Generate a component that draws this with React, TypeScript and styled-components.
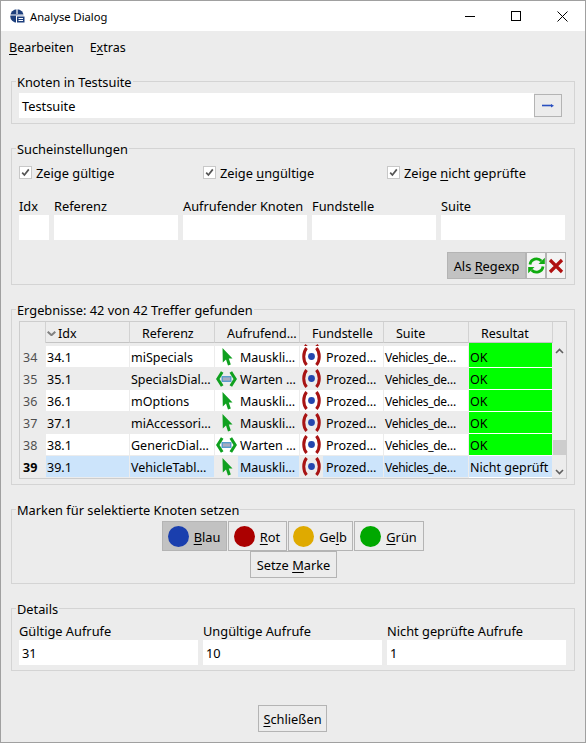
import React from "react";
import styled, { createGlobalStyle } from "styled-components";

const FONT = `"Noto Sans", "Open Sans", "Liberation Sans", sans-serif`;

const Global = createGlobalStyle`
  html, body { margin: 0; padding: 0; background: #ececec; }
  * { box-sizing: border-box; }
  body { font-family: ${FONT}; font-size: 12.8px; color: #000; }
  u { text-underline-offset: 2px; }
`;

const Window = styled.div`
  width: 586px;
  height: 743px;
  border: 1px solid #a0a0a0;
  background: #ececec;
  display: flex;
  flex-direction: column;
  overflow: hidden;
`;
const TitleBar = styled.div`
  height: 30px;
  background: #fff;
  display: flex;
  align-items: center;
  padding-left: 9px;
  flex: none;
`;
const TitleText = styled.span`
  margin-left: 5px;
  font-size: 11.2px;
  flex: 1;
`;
const WinBtn = styled.div`
  width: 46px;
  height: 30px;
  display: flex;
  align-items: center;
  justify-content: center;
`;
const MenuBar = styled.div`
  height: 32px;
  display: flex;
  align-items: center;
  gap: 16px;
  padding: 0 0 0 8px;
  flex: none;
  font-size: 12.5px;
`;
const Body = styled.div`
  display: flex;
  flex-direction: column;
  gap: 15px;
  padding: 9px 10px 0;
`;
const Group = styled.fieldset<{ $h: number }>`
  margin: 0;
  height: ${(p) => p.$h}px;
  border: 1px solid #d4d4d4;
  padding: 3px 8px 0 7px;
  min-width: 0;
  display: flex;
  flex-direction: column;
`;
const Legend = styled.legend`
  margin-left: -3px;
  padding: 0 1px;
  height: 18px;
  line-height: 20px;
`;
const Field = styled.div<{ $w?: number }>`
  height: 25px;
  background: #fff;
  padding: 2px 0 0 3px;
  line-height: 23px;
  flex: ${(p) => (p.$w ? "none" : "1")};
  width: ${(p) => (p.$w ? p.$w + "px" : "auto")};
`;
const NodeRow = styled.div`
  display: flex;
  align-items: center;
  padding-right: 4px;
`;
const PushButton = styled.button<{ $on?: boolean; $w: number; $h: number }>`
  width: ${(p) => p.$w}px;
  height: ${(p) => p.$h}px;
  flex: none;
  padding: 0;
  margin: 0;
  border: 1px solid #b4b4b4;
  background: ${(p) => (p.$on ? "#c2c2c2" : "#ececec")};
  font: inherit;
  color: #000;
  display: flex;
  align-items: center;
  justify-content: center;
`;
const IconButton = styled(PushButton)`
  background: #f3f3f3;
`;
const ButtonText = styled.span`
  padding-top: 1px;
  white-space: pre;
`;
const ChecksRow = styled.div`
  display: grid;
  grid-template-columns: 184px 184px 1fr;
  margin-top: 2px;
  height: 20px;
  align-items: center;
`;
const Check = styled.label`
  display: flex;
  align-items: center;
  gap: 4px;
`;
const CheckText = styled.span`
  padding-top: 1px;
`;
const Box = styled.span`
  width: 13px;
  height: 13px;
  background: #fff;
  border: 1px solid #c8c8c8;
  display: flex;
  align-items: center;
  justify-content: center;
`;
const FilterGrid = styled.div`
  display: grid;
  grid-template-columns: 30px 124px 124px 124px 124px;
  column-gap: 5px;
  margin-top: 14px;
`;
const ColumnLabel = styled.div`
  height: 18px;
  line-height: 20px;
  margin-bottom: 1px;
  white-space: nowrap;
`;
const FilterActions = styled.div`
  display: flex;
  justify-content: flex-end;
  margin-top: 12px;
`;
const Table = styled.div`
  width: 548px;
  height: 158px;
  border: 1px solid #cdcdcd;
  position: relative;
  overflow: hidden;
  font-size: 12.5px;
`;
const Header = styled.div`
  display: grid;
  grid-template-columns: 26px 84px 85px 85px 84px 85px 84px;
  height: 21px;
`;
const HeadCell = styled.div<{ $corner?: boolean }>`
  border-right: 1px solid #d2d2d2;
  border-bottom: ${(p) => (p.$corner ? "none" : "1px solid #c4c4c4")};
  padding: 3px 0 0 12px;
  line-height: 17px;
  white-space: nowrap;
  display: flex;
  align-items: center;
`;
const SortMark = styled.svg`
  margin-left: -11px;
  margin-right: 2px;
`;
const Rows = styled.div`
  display: flex;
  flex-direction: column;
`;
const Row = styled.div<{ $sliver?: boolean }>`
  display: grid;
  grid-template-columns: 26px 83px 1px 84px 1px 84px 1px 83px 1px 84px 1px 83px;
  height: ${(p) => (p.$sliver ? "3px" : "22px")};
  overflow: hidden;
  align-items: ${(p) => (p.$sliver ? "end" : "start")};
`;
const RowNum = styled.div<{ $bold?: boolean }>`
  height: 21px;
  padding: 3px 0 0 3px;
  line-height: 18px;
  color: ${(p) => (p.$bold ? "#000" : "#505050")};
  font-weight: ${(p) => (p.$bold ? 700 : 400)};
`;
const Sep = styled.div``;
const Cell = styled.div<{ $bg: string }>`
  height: 21px;
  padding: 3px 0 0 1px;
  line-height: 18px;
  background: ${(p) => p.$bg};
  white-space: nowrap;
  overflow: hidden;
`;
const SuiteCell = styled(Cell)`
  font-size: 12px;
  letter-spacing: -0.3px;
`;
const ResultCell = styled(Cell)`
  box-shadow: 0 1px 0 #fff;
`;
const IconCell = styled.div<{ $bg: string; $sel: boolean }>`
  height: 21px;
  background: ${(p) => (p.$sel ? "#ececec" : p.$bg)};
  display: grid;
  grid-template-columns: 23px 1fr;
  white-space: nowrap;
  overflow: hidden;
`;
const IconSlot = styled.div`
  height: 21px;
  display: flex;
  align-items: center;
  justify-content: center;
`;
const IconText = styled.div<{ $bg: string; $pad: number }>`
  background: ${(p) => p.$bg};
  padding: 3px 0 0 ${(p) => p.$pad}px;
  line-height: 18px;
  height: 21px;
`;
const Scrollbar = styled.div`
  position: absolute;
  right: 0;
  top: 21px;
  bottom: 0;
  width: 13px;
  background: #ececec;
`;
const ScrollGlyph = styled.svg<{ $top: number }>`
  position: absolute;
  left: 2px;
  top: ${(p) => p.$top}px;
`;
const Thumb = styled.div`
  position: absolute;
  left: 0;
  top: 97px;
  width: 13px;
  height: 15px;
  background: #cdcdcd;
`;
const MarkRow = styled.div`
  display: flex;
  justify-content: center;
  gap: 1px;
`;
const MarkLabel = styled(ButtonText)`
  margin-left: 5px;
`;
const Dot = styled.span<{ $c: string }>`
  width: 21px;
  height: 21px;
  border-radius: 50%;
  background: ${(p) => p.$c};
  flex: none;
`;
const CenterRow = styled.div`
  display: flex;
  justify-content: center;
  padding-left: 2px;
`;
const DetailGrid = styled.div`
  display: grid;
  grid-template-columns: 179px 179px 179px;
  column-gap: 5px;
  margin-top: 1px;
`;
const DetailLabel = styled.div`
  height: 18px;
  line-height: 20px;
  margin-bottom: 1px;
  white-space: nowrap;
`;
const Footer = styled.div`
  display: flex;
  justify-content: center;
  margin-top: 34px;
  padding-right: 1px;
`;

const AppIcon = () => (
  <svg width="15" height="15" viewBox="0 0 15 15">
    <circle cx="7" cy="7" r="6.8" fill="#1d3f7d" />
    <path d="M7 0V5M0 6H14" stroke="#fff" strokeWidth="1.2" />
    <rect x="6" y="6.5" width="9" height="7.5" fill="#fff" />
    <rect x="7" y="7.5" width="7.5" height="6" fill="#1d3f7d" />
    <path d="M8.5 9.5H13M8.5 11.5H13" stroke="#fff" strokeWidth="1" />
  </svg>
);
const MinIcon = () => (
  <svg width="10" height="10" viewBox="0 0 10 10"><path d="M0 5.5H10" stroke="#000" /></svg>
);
const MaxIcon = () => (
  <svg width="10" height="10" viewBox="0 0 10 10"><rect x=".5" y=".5" width="9" height="9" fill="none" stroke="#000" /></svg>
);
const CloseIcon = () => (
  <svg width="11" height="11" viewBox="0 0 11 11"><path d="M.5 .5L10.5 10.5M10.5 .5L.5 10.5" stroke="#000" /></svg>
);
const Tick = () => (
  <svg width="9" height="9" viewBox="0 0 9 9"><path d="M1.2 4.6L3.4 7L7.8 1.4" fill="none" stroke="#555" strokeWidth="1.7" /></svg>
);
const ArrowIcon = () => (
  <svg width="12" height="6" viewBox="0 0 12 6"><path d="M0 2.5H10" stroke="#2a50c0" strokeWidth="1.6" /><path d="M9 1L12 2.7L9 4.4Z" fill="#2a50c0" /></svg>
);
const RefreshIcon = () => (
  <svg width="17" height="17" viewBox="0 0 17 17">
    <path d="M2 7.5A6.6 6.6 0 0 1 13.4 4" fill="none" stroke="#10ab10" strokeWidth="2.8" />
    <path d="M10.5 7H16.8V.8Z" fill="#10ab10" />
    <path d="M15 9.5A6.6 6.6 0 0 1 3.6 13" fill="none" stroke="#10ab10" strokeWidth="2.8" />
    <path d="M6.5 10H.2V16.2Z" fill="#10ab10" />
  </svg>
);
const CrossIcon = () => (
  <svg width="16" height="16" viewBox="0 0 16 16"><path d="M2 2L14 14M14 2L2 14" stroke="#b01010" strokeWidth="3.2" /></svg>
);
const CursorGlyph = styled.svg`
  margin-left: 2px;
`;
const CursorIcon = () => (
  <CursorGlyph width="11" height="18" viewBox="0 0 11 18"><path d="M.5 0L10.5 10.5H6.8L8.8 16.5L6 17.5L4 11.6L.8 14.5Z" fill="#0fa01f" /></CursorGlyph>
);
const WaitIcon = () => (
  <svg width="21" height="16" viewBox="0 0 21 16">
    <path d="M6.2 1L1.8 8L6.2 15" fill="none" stroke="#0fa01f" strokeWidth="3" />
    <path d="M14.8 1L19.2 8L14.8 15" fill="none" stroke="#0fa01f" strokeWidth="3" />
    <rect x="5.5" y="5" width="10" height="6" fill="#5a9ccc" />
    <rect x="7" y="6.4" width="7" height="3.2" fill="#a8acc0" />
  </svg>
);
const ProcIcon = () => (
  <svg width="19" height="19" viewBox="0 0 19 19">
    <path d="M4.6 1C.8 5.5 .8 13.5 4.6 18" fill="none" stroke="#a81414" strokeWidth="3" />
    <path d="M14.4 1C18.2 5.5 18.2 13.5 14.4 18" fill="none" stroke="#a81414" strokeWidth="3" />
    <circle cx="9.5" cy="9.5" r="3.4" fill="#2446ae" />
  </svg>
);

type RowData = { n: number; ref: string; wait: boolean; caller: string; res: string };
const rows: RowData[] = [
  { n: 34, ref: "miSpecials", wait: false, caller: "Mauskli…", res: "OK" },
  { n: 35, ref: "SpecialsDial…", wait: true, caller: "Warten …", res: "OK" },
  { n: 36, ref: "mOptions", wait: false, caller: "Mauskli…", res: "OK" },
  { n: 37, ref: "miAccessori…", wait: false, caller: "Mauskli…", res: "OK" },
  { n: 38, ref: "GenericDial…", wait: true, caller: "Warten …", res: "OK" },
  { n: 39, ref: "VehicleTabl…", wait: false, caller: "Mauskli…", res: "Nicht geprüft" },
];

const ResultRow = ({ r, idx }: { r: RowData; idx: number }) => {
  const sel = r.n === 39;
  const bg = sel ? "#cce4fb" : idx % 2 === 0 ? "#ffffff" : "#ececec";
  return (
    <Row>
      <RowNum $bold={sel}>{r.n}</RowNum>
      <Cell $bg={bg}>{r.n}.1</Cell>
      <Sep />
      <Cell $bg={bg}>{r.ref}</Cell>
      <Sep />
      <IconCell $bg={bg} $sel={sel}>
        <IconSlot>{r.wait ? <WaitIcon /> : <CursorIcon />}</IconSlot>
        <IconText $bg={bg} $pad={2}>{r.caller}</IconText>
      </IconCell>
      <Sep />
      <IconCell $bg={bg} $sel={sel}>
        <IconSlot><ProcIcon /></IconSlot>
        <IconText $bg={bg} $pad={3}>Prozed…</IconText>
      </IconCell>
      <Sep />
      <SuiteCell $bg={bg}>Vehicles_de…</SuiteCell>
      <Sep />
      <ResultCell $bg={r.res === "OK" ? "#00ff00" : bg}>{r.res}</ResultCell>
    </Row>
  );
};

const ClippedRow = () => (
  <Row $sliver>
    <RowNum />
    <Cell $bg="#ececec" />
    <Sep />
    <Cell $bg="#ececec" />
    <Sep />
    <Cell $bg="#ececec" />
    <Sep />
    <IconCell $bg="#ececec" $sel={false}>
      <IconSlot><ProcIcon /></IconSlot>
    </IconCell>
    <Sep />
    <Cell $bg="#ececec" />
    <Sep />
    <Cell $bg="#00ff00" />
  </Row>
);

export default function App() {
  return (
    <Window>
      <Global />
      <TitleBar>
        <AppIcon />
        <TitleText>Analyse Dialog</TitleText>
        <WinBtn><MinIcon /></WinBtn>
        <WinBtn><MaxIcon /></WinBtn>
        <WinBtn><CloseIcon /></WinBtn>
      </TitleBar>
      <MenuBar>
        <span><u>B</u>earbeiten</span>
        <span>E<u>x</u>tras</span>
      </MenuBar>
      <Body>
        <Group $h={52}>
          <Legend>Knoten in Testsuite</Legend>
          <NodeRow>
            <Field>Testsuite</Field>
            <PushButton $w={28} $h={23}><ArrowIcon /></PushButton>
          </NodeRow>
        </Group>
        <Group $h={146}>
          <Legend>Sucheinstellungen</Legend>
          <ChecksRow>
            <Check><Box><Tick /></Box><CheckText>Zeige <u>g</u>ültige</CheckText></Check>
            <Check><Box><Tick /></Box><CheckText>Zeige <u>u</u>ngültige</CheckText></Check>
            <Check><Box><Tick /></Box><CheckText>Zeige <u>n</u>icht geprüfte</CheckText></Check>
          </ChecksRow>
          <FilterGrid>
            <ColumnLabel>Idx</ColumnLabel>
            <ColumnLabel>Referenz</ColumnLabel>
            <ColumnLabel>Aufrufender Knoten</ColumnLabel>
            <ColumnLabel>Fundstelle</ColumnLabel>
            <ColumnLabel>Suite</ColumnLabel>
            <Field />
            <Field />
            <Field />
            <Field />
            <Field />
          </FilterGrid>
          <FilterActions>
            <PushButton $on $w={79} $h={27}><ButtonText>Als <u>R</u>egexp</ButtonText></PushButton>
            <IconButton $w={20} $h={27}><RefreshIcon /></IconButton>
            <IconButton $w={20} $h={27}><CrossIcon /></IconButton>
          </FilterActions>
        </Group>
        <Group $h={185}>
          <Legend>Ergebnisse: 42 von 42 Treffer gefunden</Legend>
          <Table>
            <Header>
              <HeadCell $corner />
              <HeadCell>
                <SortMark width="9" height="5" viewBox="0 0 9 5"><path d="M.7 .7L4.5 4.2L8.3 .7" fill="none" stroke="#808080" strokeWidth="2" /></SortMark>
                Idx
              </HeadCell>
              <HeadCell>Referenz</HeadCell>
              <HeadCell>Aufrufend…</HeadCell>
              <HeadCell>Fundstelle</HeadCell>
              <HeadCell>Suite</HeadCell>
              <HeadCell>Resultat</HeadCell>
            </Header>
            <Rows>
              <ClippedRow />
              {rows.map((r, i) => <ResultRow key={r.n} r={r} idx={i} />)}
            </Rows>
            <Scrollbar>
              <ScrollGlyph $top={5} width="9" height="6" viewBox="0 0 9 6"><path d="M1 5L4.5 1.5L8 5" fill="none" stroke="#606060" strokeWidth="1.6" /></ScrollGlyph>
              <Thumb />
              <ScrollGlyph $top={126} width="9" height="6" viewBox="0 0 9 6"><path d="M1 1L4.5 4.5L8 1" fill="none" stroke="#606060" strokeWidth="1.6" /></ScrollGlyph>
            </Scrollbar>
          </Table>
        </Group>
        <Group $h={84}>
          <Legend>Marken für selektierte Knoten setzen</Legend>
          <MarkRow>
            <PushButton $on $w={65} $h={30}><Dot $c="#1a3fae" /><MarkLabel><u>B</u>lau</MarkLabel></PushButton>
            <PushButton $w={59} $h={30}><Dot $c="#ab0000" /><MarkLabel><u>R</u>ot</MarkLabel></PushButton>
            <PushButton $w={65} $h={30}><Dot $c="#dfaa00" /><MarkLabel>Ge<u>l</u>b</MarkLabel></PushButton>
            <PushButton $w={70} $h={30}><Dot $c="#00a800" /><MarkLabel><u>G</u>rün</MarkLabel></PushButton>
          </MarkRow>
          <CenterRow>
            <PushButton $w={87} $h={27}><ButtonText>Setze <u>M</u>arke</ButtonText></PushButton>
          </CenterRow>
        </Group>
        <Group $h={72}>
          <Legend>Details</Legend>
          <DetailGrid>
            <div><DetailLabel>Gültige Aufrufe</DetailLabel><Field>31</Field></div>
            <div><DetailLabel>Ungültige Aufrufe</DetailLabel><Field>10</Field></div>
            <div><DetailLabel>Nicht geprüfte Aufrufe</DetailLabel><Field>1</Field></div>
          </DetailGrid>
        </Group>
      </Body>
      <Footer>
        <PushButton $w={69} $h={27}><ButtonText><u>S</u>chließen</ButtonText></PushButton>
      </Footer>
    </Window>
  );
}
